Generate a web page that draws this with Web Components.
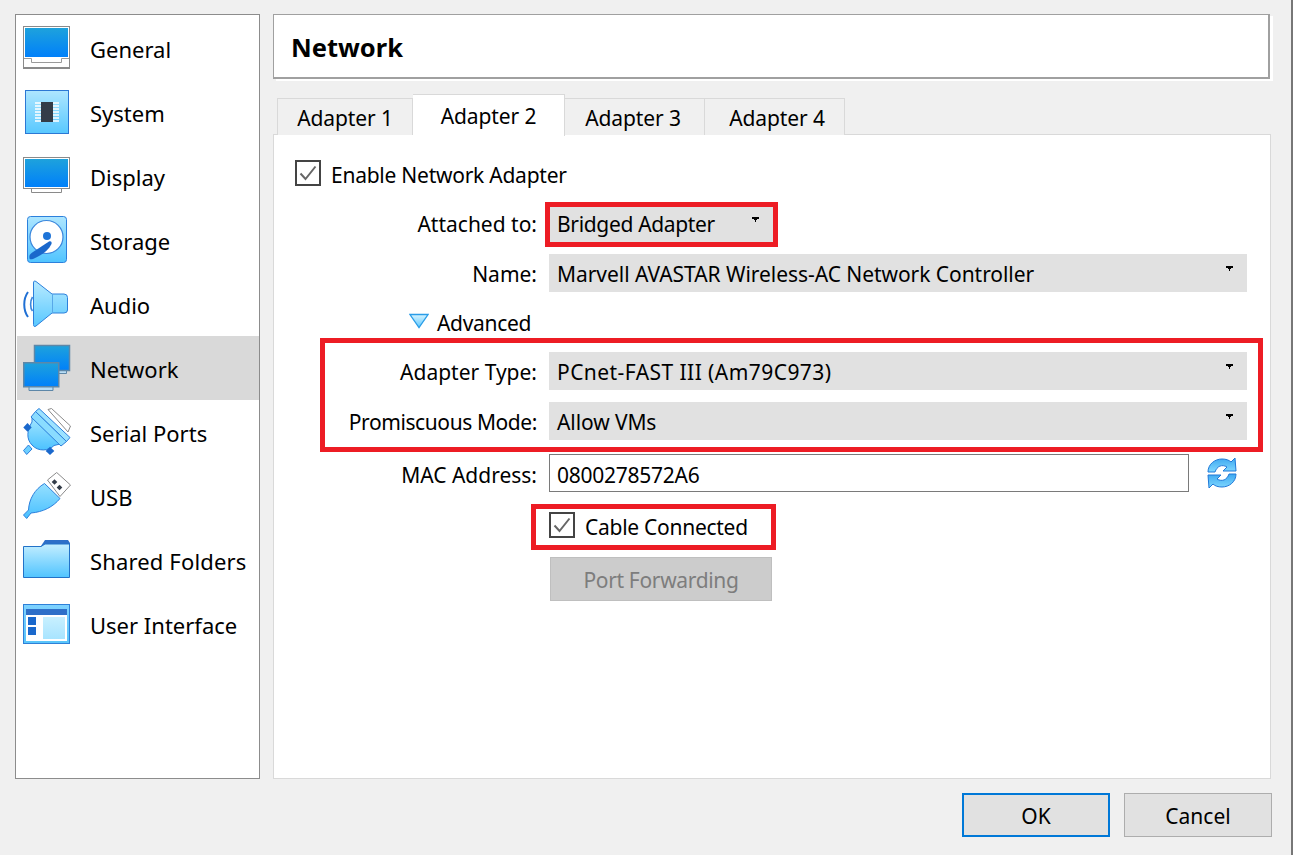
<!DOCTYPE html>
<html>
<head>
<meta charset="utf-8">
<title>Network settings</title>
<style>
  html, body { margin: 0; height: 100%; }
  body {
    background: #f0f0f0;
    color: #000;
    font-family: "Noto Sans", "Open Sans", sans-serif;
    font-size: 21px;
    overflow: hidden;
    box-sizing: border-box;
    border-right: 2px solid #777;
  }
</style>
</head>
<body>
<vb-dialog>
  <vb-nav slot="nav">
    <vb-nav-item icon="general">General</vb-nav-item>
    <vb-nav-item icon="system">System</vb-nav-item>
    <vb-nav-item icon="display">Display</vb-nav-item>
    <vb-nav-item icon="storage">Storage</vb-nav-item>
    <vb-nav-item icon="audio">Audio</vb-nav-item>
    <vb-nav-item icon="network" selected>Network</vb-nav-item>
    <vb-nav-item icon="serial">Serial Ports</vb-nav-item>
    <vb-nav-item icon="usb">USB</vb-nav-item>
    <vb-nav-item icon="folders" style="letter-spacing: .15px">Shared Folders</vb-nav-item>
    <vb-nav-item icon="ui">User Interface</vb-nav-item>
  </vb-nav>

  <vb-page-title slot="title">Network</vb-page-title>

  <vb-tabs slot="tabs">
    <vb-tab>Adapter 1</vb-tab>
    <vb-tab active>Adapter 2</vb-tab>
    <vb-tab style="padding-right: 3px">Adapter 3</vb-tab>
    <vb-tab style="padding-left: 5px">Adapter 4</vb-tab>
  </vb-tabs>

  <vb-pane slot="pane">
    <vb-check style="margin: 25px 0 0 21px; letter-spacing: -.25px">Enable Network Adapter</vb-check>

    <vb-row style="margin-top: 19px; --text-shift: 0px" label="Attached to:">
      <vb-combo style="width: 224px; letter-spacing: -.33px">Bridged Adapter</vb-combo>
    </vb-row>
    <vb-row style="margin-top: 11px" label="Name:">
      <vb-combo style="letter-spacing: -.05px">Marvell AVASTAR Wireless-AC Network Controller</vb-combo>
    </vb-row>

    <vb-expander style="margin: 12px 0 0 135px; letter-spacing: -.3px">Advanced</vb-expander>

    <vb-row style="margin-top: 10px" label="Adapter Type:">
      <vb-combo style="letter-spacing: .44px">PCnet-FAST III (Am79C973)</vb-combo>
    </vb-row>
    <vb-row style="margin-top: 12px; letter-spacing: -.41px" label="Promiscuous Mode:">
      <vb-combo style="letter-spacing: -.1px">Allow VMs</vb-combo>
    </vb-row>
    <vb-row style="margin-top: 14px; --text-shift: 4px" label="MAC Address:">
      <vb-mac style="letter-spacing: -.25px">0800278572A6</vb-mac>
    </vb-row>

    <vb-row style="margin-top: 20px; height: 26px">
      <vb-check style="letter-spacing: -.27px">Cable Connected</vb-check>
    </vb-row>
    <vb-row style="margin-top: 19px; height: 44px">
      <vb-button disabled style="width: 222px; margin-left: 1px; letter-spacing: -.33px">Port Forwarding</vb-button>
    </vb-row>

    <vb-highlight style="left: 271px; top: 67px; width: 233px; height: 45px"></vb-highlight>
    <vb-highlight style="left: 46px; top: 203px; width: 943px; height: 114px"></vb-highlight>
    <vb-highlight style="left: 257px; top: 369px; width: 245px; height: 46px"></vb-highlight>
  </vb-pane>

  <vb-button slot="footer" default>OK</vb-button>
  <vb-button slot="footer">Cancel</vb-button>
</vb-dialog>

<script>
const ICONS = {
  general: `
    <defs><linearGradient id="g" x1="0" y1="0" x2="0" y2="1"><stop offset="0" stop-color="#1ea2dc"/><stop offset="1" stop-color="#0080fa"/></linearGradient></defs>
    <rect x="0.5" y="2.5" width="46" height="42" fill="#fff" stroke="#8a8a8a"/>
    <rect x="2" y="4" width="43" height="29" fill="url(#g)"/>
    <path d="M1 34.5H8.5V38.5H38.5V34.5H46" fill="none" stroke="#9a9a9a"/>
    <rect x="1" y="43" width="46" height="2" fill="#8a8a8a"/>`,
  system: `
    <defs><linearGradient id="g" x1="0" y1="0" x2="0" y2="1"><stop offset="0" stop-color="#aee6ff"/><stop offset="1" stop-color="#58c8ff"/></linearGradient></defs>
    <rect x="2.5" y="2.5" width="43" height="43" fill="url(#g)" stroke="#2c78d4"/>
    <path d="M12 15h24M12 18h24M12 21h24M12 24h24M12 27h24M12 30h24M12 33h24" stroke="#fff" stroke-width="1.6"/>
    <rect x="18" y="14" width="12" height="20" fill="#343c48"/>`,
  display: `
    <defs><linearGradient id="g" x1="0" y1="0" x2="0" y2="1"><stop offset="0" stop-color="#1ea2dc"/><stop offset="1" stop-color="#0080fa"/></linearGradient></defs>
    <path d="M8.5 36.5V40.5H38.5V36.5" fill="#fff" stroke="#8a8a8a"/>
    <rect x="0.5" y="5.5" width="46" height="31" fill="#fff" stroke="#8a8a8a"/>
    <rect x="2" y="7" width="43" height="28" fill="url(#g)"/>`,
  storage: `
    <defs><linearGradient id="g" x1="0" y1="0" x2="0" y2="1"><stop offset="0" stop-color="#aee6ff"/><stop offset="1" stop-color="#50c4ff"/></linearGradient></defs>
    <rect x="4.5" y="0.5" width="39" height="46" rx="3" fill="url(#g)" stroke="#2c80dc"/>
    <circle cx="23.5" cy="21" r="16.5" fill="#fff" stroke="#3a86dc" stroke-width="1.2"/>
    <circle cx="24" cy="20" r="4" fill="#1e74d8"/>
    <path d="M6.5 42.5C6 39 7 38 10 36L26 25.5C28 24.5 29 26 28.5 28C25 35 19 39 10 43C8 43.5 7 43.5 6.5 42.5Z" fill="#1a68cc"/>`,
  audio: `
    <defs><linearGradient id="g" x1="0" y1="0" x2="0" y2="1"><stop offset="0" stop-color="#b8eaff"/><stop offset="1" stop-color="#58c8ff"/></linearGradient></defs>
    <path d="M5 12C0 19 0 30 5 37" fill="none" stroke="#2070d4" stroke-width="2"/>
    <path d="M9.5 17C7 21 7 28 9.5 31" fill="none" stroke="#3a86dc" stroke-width="1.6"/>
    <path d="M10.5 3Q10.5 0 13 1.5L29 14H41Q44.5 14 44.5 17.5V30Q44.5 33 41 33H29L13 46Q10.5 47.5 10.5 44.5Z" fill="url(#g)" stroke="#2c80dc"/>
    <path d="M29.5 14V33" stroke="#58a8e8" stroke-width="1"/>`,
  network: `
    <defs><linearGradient id="g" x1="0" y1="0" x2="0" y2="1"><stop offset="0" stop-color="#1ea2dc"/><stop offset="1" stop-color="#0080fa"/></linearGradient></defs>
    <path d="M36 26.5H43.5V29.5H34" fill="#b8ddf6" stroke="#5d87a8"/>
    <rect x="11.5" y="1.5" width="35" height="25" fill="url(#g)" stroke="#5d87a8" stroke-width="1.5"/>
    <path d="M6 42.5V46.5H30V42.5" fill="#b8ddf6" stroke="#5d87a8"/>
    <rect x="0.75" y="18.75" width="35" height="24" fill="url(#g)" stroke="#5d87a8" stroke-width="1.5"/>`,
  serial: `
    <defs><linearGradient id="g" x1="0" y1="0" x2="0" y2="1"><stop offset="0" stop-color="#a4e6ff"/><stop offset="1" stop-color="#4cc2ff"/></linearGradient></defs>
    <path d="M25 1.5L28.5 0.5L47.5 18L45 24Z" fill="#fff" stroke="#8a8a8a"/>
    <path d="M9 9L37 36L31 37.5C26 43 15 44 9 37C3 31 4 22 9 14Z" fill="url(#g)" stroke="#2c80dc"/>
    <path d="M5.5 37L0.5 42.5L3.7 46.5L9 41Z" fill="#6ccfff" stroke="#2c80dc"/>
    <path d="M16 0.5L47 29.5L43.5 33.5L12.5 3.5Z" fill="#9ce2ff" stroke="#2c80dc"/>
    <path d="M12.5 3.5L43.5 33.5L38 38L8 9Z" fill="#8adcff" stroke="#2c80dc"/>
    <path d="M4.5 15L8.7 19.5L4.5 23.7L0.3 19.5Z" fill="#1a68cc"/>
    <path d="M27 38.7L31.3 43L27 47L22.7 43Z" fill="#1a68cc"/>`,
  usb: `
    <defs><linearGradient id="g" x1="0" y1="0" x2="0" y2="1"><stop offset="0" stop-color="#96e0ff"/><stop offset="1" stop-color="#48c0ff"/></linearGradient></defs>
    <path d="M24.5 8L33.7 0.5L47.5 13L37 24.5Z" fill="#fff" stroke="#8a8a8a"/>
    <rect x="29.5" y="8" width="4" height="4" fill="#333c48" transform="rotate(45 31.5 10)"/>
    <rect x="34.5" y="13.5" width="4" height="4" fill="#333c48" transform="rotate(45 36.5 15.5)"/>
    <path d="M21.5 11.5L37 26.5C30 35 20 40 8 41L3.7 46.5L0.5 43L5.5 38C6 27 12 17 21.5 11.5Z" fill="url(#g)" stroke="#2c80dc"/>`,
  folders: `
    <defs><linearGradient id="g" x1="0" y1="0" x2="0" y2="1"><stop offset="0" stop-color="#c4eeff"/><stop offset="1" stop-color="#50c4ff"/></linearGradient></defs>
    <path d="M18 10L22 4H45L47 7V12H18Z" fill="#2e6fc8"/>
    <path d="M0.5 10.5H18L22 8H46.5V41.5H0.5Z" fill="url(#g)" stroke="#2272c8"/>`,
  ui: `
    <defs>
      <linearGradient id="g" x1="0" y1="0" x2="0" y2="1"><stop offset="0" stop-color="#7ed2ff"/><stop offset="1" stop-color="#58c4fa"/></linearGradient>
      <linearGradient id="p" x1="0" y1="0" x2="0" y2="1"><stop offset="0" stop-color="#c8f0ff"/><stop offset="1" stop-color="#a8e4ff"/></linearGradient>
    </defs>
    <rect x="0.5" y="4.5" width="46" height="39" fill="url(#g)" stroke="#2e80d8"/>
    <rect x="3" y="9" width="41" height="32" fill="#fff"/>
    <rect x="3" y="9" width="41" height="6" fill="#2e6fc8"/>
    <rect x="5" y="17" width="8" height="8" fill="#1a68cc"/>
    <rect x="5" y="27" width="8" height="8" fill="#1a68cc"/>
    <rect x="20" y="17" width="22" height="22" fill="url(#p)"/>`
};

class VbDialog extends HTMLElement {
  constructor() {
    super();
    this.attachShadow({ mode: 'open' });
    this.shadowRoot.innerHTML = `
    <style>
      :host {
        display: grid;
        grid-template-columns: 245px 1fr;
        grid-template-rows: 765px 44px;
        column-gap: 13px;
        row-gap: 14px;
        padding: 14px 19px 0 15px;
      }
      .main { display: flex; flex-direction: column; min-width: 0; margin-right: 1px; }
      .footer { grid-column: 1 / 3; display: flex; justify-content: flex-end; gap: 14px; }
      ::slotted(vb-button) { width: 148px; }
    </style>
    <slot name="nav"></slot>
    <div class="main">
      <slot name="title"></slot>
      <slot name="tabs"></slot>
      <slot name="pane"></slot>
    </div>
    <div class="footer"><slot name="footer"></slot></div>`;
  }
}

class VbNav extends HTMLElement {
  constructor() {
    super();
    this.attachShadow({ mode: 'open' });
    this.shadowRoot.innerHTML = `
    <style>
      :host {
        display: block;
        background: #fff;
        border: 1px solid #8c8c8c;
        padding: 1px 0 1px 1px;
        box-sizing: border-box;
        font-size: 22px;
      }
    </style>
    <slot></slot>`;
  }
}

class VbNavItem extends HTMLElement {
  constructor() {
    super();
    this.attachShadow({ mode: 'open' });
    this.shadowRoot.innerHTML = `
    <style>
      :host {
        display: flex;
        align-items: center;
        height: 64px;
        padding-left: 6px;
        gap: 19px;
      }
      :host([selected]) { background: #d9d9d9; }
      svg { width: 48px; height: 48px; flex: none; }
      span { margin-top: 2px; }
    </style>
    <svg viewBox="0 0 48 48">${ICONS[this.getAttribute('icon')]}</svg>
    <span><slot></slot></span>`;
  }
}

class VbPageTitle extends HTMLElement {
  constructor() {
    super();
    this.attachShadow({ mode: 'open' });
    this.shadowRoot.innerHTML = `
    <style>
      :host {
        display: flex;
        align-items: center;
        height: 65px;
        margin-right: 1px;
        box-sizing: border-box;
        background: #fff;
        border: 1px solid #a0a0a0;
        border-right-width: 2px;
        border-bottom-width: 2px;
        box-shadow: 3px 2px 0 #fff;
        padding: 2px 0 0 17px;
        font-weight: 700;
        font-size: 25.5px;
      }
    </style>
    <slot></slot>`;
  }
}

class VbTabs extends HTMLElement {
  constructor() {
    super();
    this.attachShadow({ mode: 'open' });
    this.shadowRoot.innerHTML = `
    <style>
      :host {
        display: flex;
        align-items: flex-end;
        height: 42px;
        margin-top: 15px;
        margin-bottom: -2px;
        padding-left: 4px;
        position: relative;
        z-index: 1;
        letter-spacing: -.1px;
      }
    </style>
    <slot></slot>`;
  }
}

class VbTab extends HTMLElement {
  constructor() {
    super();
    this.attachShadow({ mode: 'open' });
    this.shadowRoot.innerHTML = `
    <style>
      :host {
        display: flex;
        align-items: center;
        justify-content: center;
        box-sizing: border-box;
        height: 37px;
        width: 140px;
        margin-bottom: 1px;
        padding-top: 2px;
        background: #f0f0f0;
        border: 1px solid #d9d9d9;
        border-left-width: 0;
        border-bottom-width: 0;
      }
      :host(:first-child) { width: 136px; border-left-width: 1px; }
      :host([active]) {
        width: 152px;
        height: 42px;
        margin-bottom: 0;
        background: #fff;
        padding-top: 1px;
      }
    </style>
    <slot></slot>`;
  }
}

class VbPane extends HTMLElement {
  constructor() {
    super();
    this.attachShadow({ mode: 'open' });
    this.shadowRoot.innerHTML = `
    <style>
      :host {
        display: flex;
        flex-direction: column;
        flex: 1;
        position: relative;
        background: #fff;
        border: 1px solid #d9d9d9;
        padding-right: 23px;
        --text-shift: 2px;
      }
    </style>
    <slot></slot>`;
  }
}

class VbRow extends HTMLElement {
  constructor() {
    super();
    this.attachShadow({ mode: 'open' });
    this.shadowRoot.innerHTML = `
    <style>
      :host {
        display: grid;
        grid-template-columns: 263px 1fr;
        column-gap: 12px;
        align-items: stretch;
        height: 38px;
      }
      .label { text-align: right; align-self: center; margin-top: var(--text-shift); }
    </style>
    <div class="label">${this.getAttribute('label') || ''}</div>
    <slot></slot>`;
  }
}

class VbCombo extends HTMLElement {
  constructor() {
    super();
    this.attachShadow({ mode: 'open' });
    this.shadowRoot.innerHTML = `
    <style>
      :host {
        display: flex;
        align-items: center;
        justify-content: space-between;
        box-sizing: border-box;
        background: #e1e1e1;
        padding: var(--text-shift) 14px 0 8px;
      }
      svg { width: 7px; height: 5px; margin: 0 0 calc(9px + var(--text-shift)) 0; }
    </style>
    <slot></slot>
    <svg viewBox="0 0 7 5"><path d="M0 0H7V2H5V3H4V5H3V3H2V2H0Z"/></svg>`;
  }
}

class VbCheck extends HTMLElement {
  constructor() {
    super();
    this.attachShadow({ mode: 'open' });
    this.shadowRoot.innerHTML = `
    <style>
      :host { display: flex; align-items: center; gap: 10px; height: 26px; }
      svg { width: 26px; height: 26px; flex: none; }
      span { margin-top: 4px; }
    </style>
    <svg viewBox="0 0 26 26">
      <rect x="1" y="1" width="24" height="24" fill="#fff" stroke="#444" stroke-width="2"/>
      <path d="M5.5 13.5L10.5 19L20.5 6.5" fill="none" stroke="#666" stroke-width="2"/>
    </svg>
    <span><slot></slot></span>`;
  }
}

class VbExpander extends HTMLElement {
  constructor() {
    super();
    this.attachShadow({ mode: 'open' });
    this.shadowRoot.innerHTML = `
    <style>
      :host { display: flex; align-items: center; gap: 8px; height: 38px; }
      svg { width: 20px; height: 16px; flex: none; margin-bottom: 4px; }
    </style>
    <svg viewBox="0 0 20 16">
      <defs><linearGradient id="t" x1="0" y1="0" x2="0" y2="1"><stop offset="0" stop-color="#d8f4ff"/><stop offset="1" stop-color="#5cc8ff"/></linearGradient></defs>
      <path d="M1 1.5H19L10 14.5Z" fill="url(#t)" stroke="#2a9de8" stroke-width="1.3"/>
    </svg>
    <slot></slot>`;
  }
}

class VbMac extends HTMLElement {
  constructor() {
    super();
    this.attachShadow({ mode: 'open' });
    this.shadowRoot.innerHTML = `
    <style>
      :host { display: flex; align-items: center; gap: 18px; }
      .box {
        flex: none;
        width: 640px;
        height: 38px;
        box-sizing: border-box;
        display: flex;
        align-items: center;
        padding: var(--text-shift) 0 0 7px;
        border: 1px solid #7a7a7a;
      }
      svg { width: 30px; height: 32px; flex: none; }
    </style>
    <div class="box"><slot></slot></div>
    <svg viewBox="0 0 30 32">
      <defs><linearGradient id="r" x1="0" y1="0" x2="0" y2="1"><stop offset="0" stop-color="#3da8f0"/><stop offset="1" stop-color="#80d8ff"/></linearGradient></defs>
      <path d="M1 15C1 7 8 2 15 2C19 2 22 3 24 5L28 1L29 14H16L20 10C15 7 10 9 8 15Z" fill="url(#r)" stroke="#1f78d8"/>
      <path d="M29 17C29 25 22 30 15 30C11 30 8 29 6 27L2 31L1 18H14L10 22C15 25 20 23 22 17Z" fill="url(#r)" stroke="#1f78d8"/>
    </svg>`;
  }
}

class VbButton extends HTMLElement {
  constructor() {
    super();
    this.attachShadow({ mode: 'open' });
    this.shadowRoot.innerHTML = `
    <style>
      :host {
        display: flex;
        align-items: center;
        justify-content: center;
        box-sizing: border-box;
        padding-top: 2px;
        background: #e1e1e1;
        border: 1px solid #adadad;
      }
      :host([default]) { border: 2px solid #0078d7; }
      :host([disabled]) { background: #cccccc; border-color: #bfbfbf; color: #7d7d7d; }
    </style>
    <slot></slot>`;
  }
}

class VbHighlight extends HTMLElement {
  constructor() {
    super();
    this.attachShadow({ mode: 'open' });
    this.shadowRoot.innerHTML = `
    <style>
      :host {
        display: block;
        position: absolute;
        box-sizing: border-box;
        border: 5px solid #ed1c24;
        pointer-events: none;
      }
    </style>`;
  }
}

customElements.define('vb-dialog', VbDialog);
customElements.define('vb-nav', VbNav);
customElements.define('vb-nav-item', VbNavItem);
customElements.define('vb-page-title', VbPageTitle);
customElements.define('vb-tabs', VbTabs);
customElements.define('vb-tab', VbTab);
customElements.define('vb-pane', VbPane);
customElements.define('vb-row', VbRow);
customElements.define('vb-combo', VbCombo);
customElements.define('vb-check', VbCheck);
customElements.define('vb-expander', VbExpander);
customElements.define('vb-mac', VbMac);
customElements.define('vb-button', VbButton);
customElements.define('vb-highlight', VbHighlight);
</script>
</body>
</html>
